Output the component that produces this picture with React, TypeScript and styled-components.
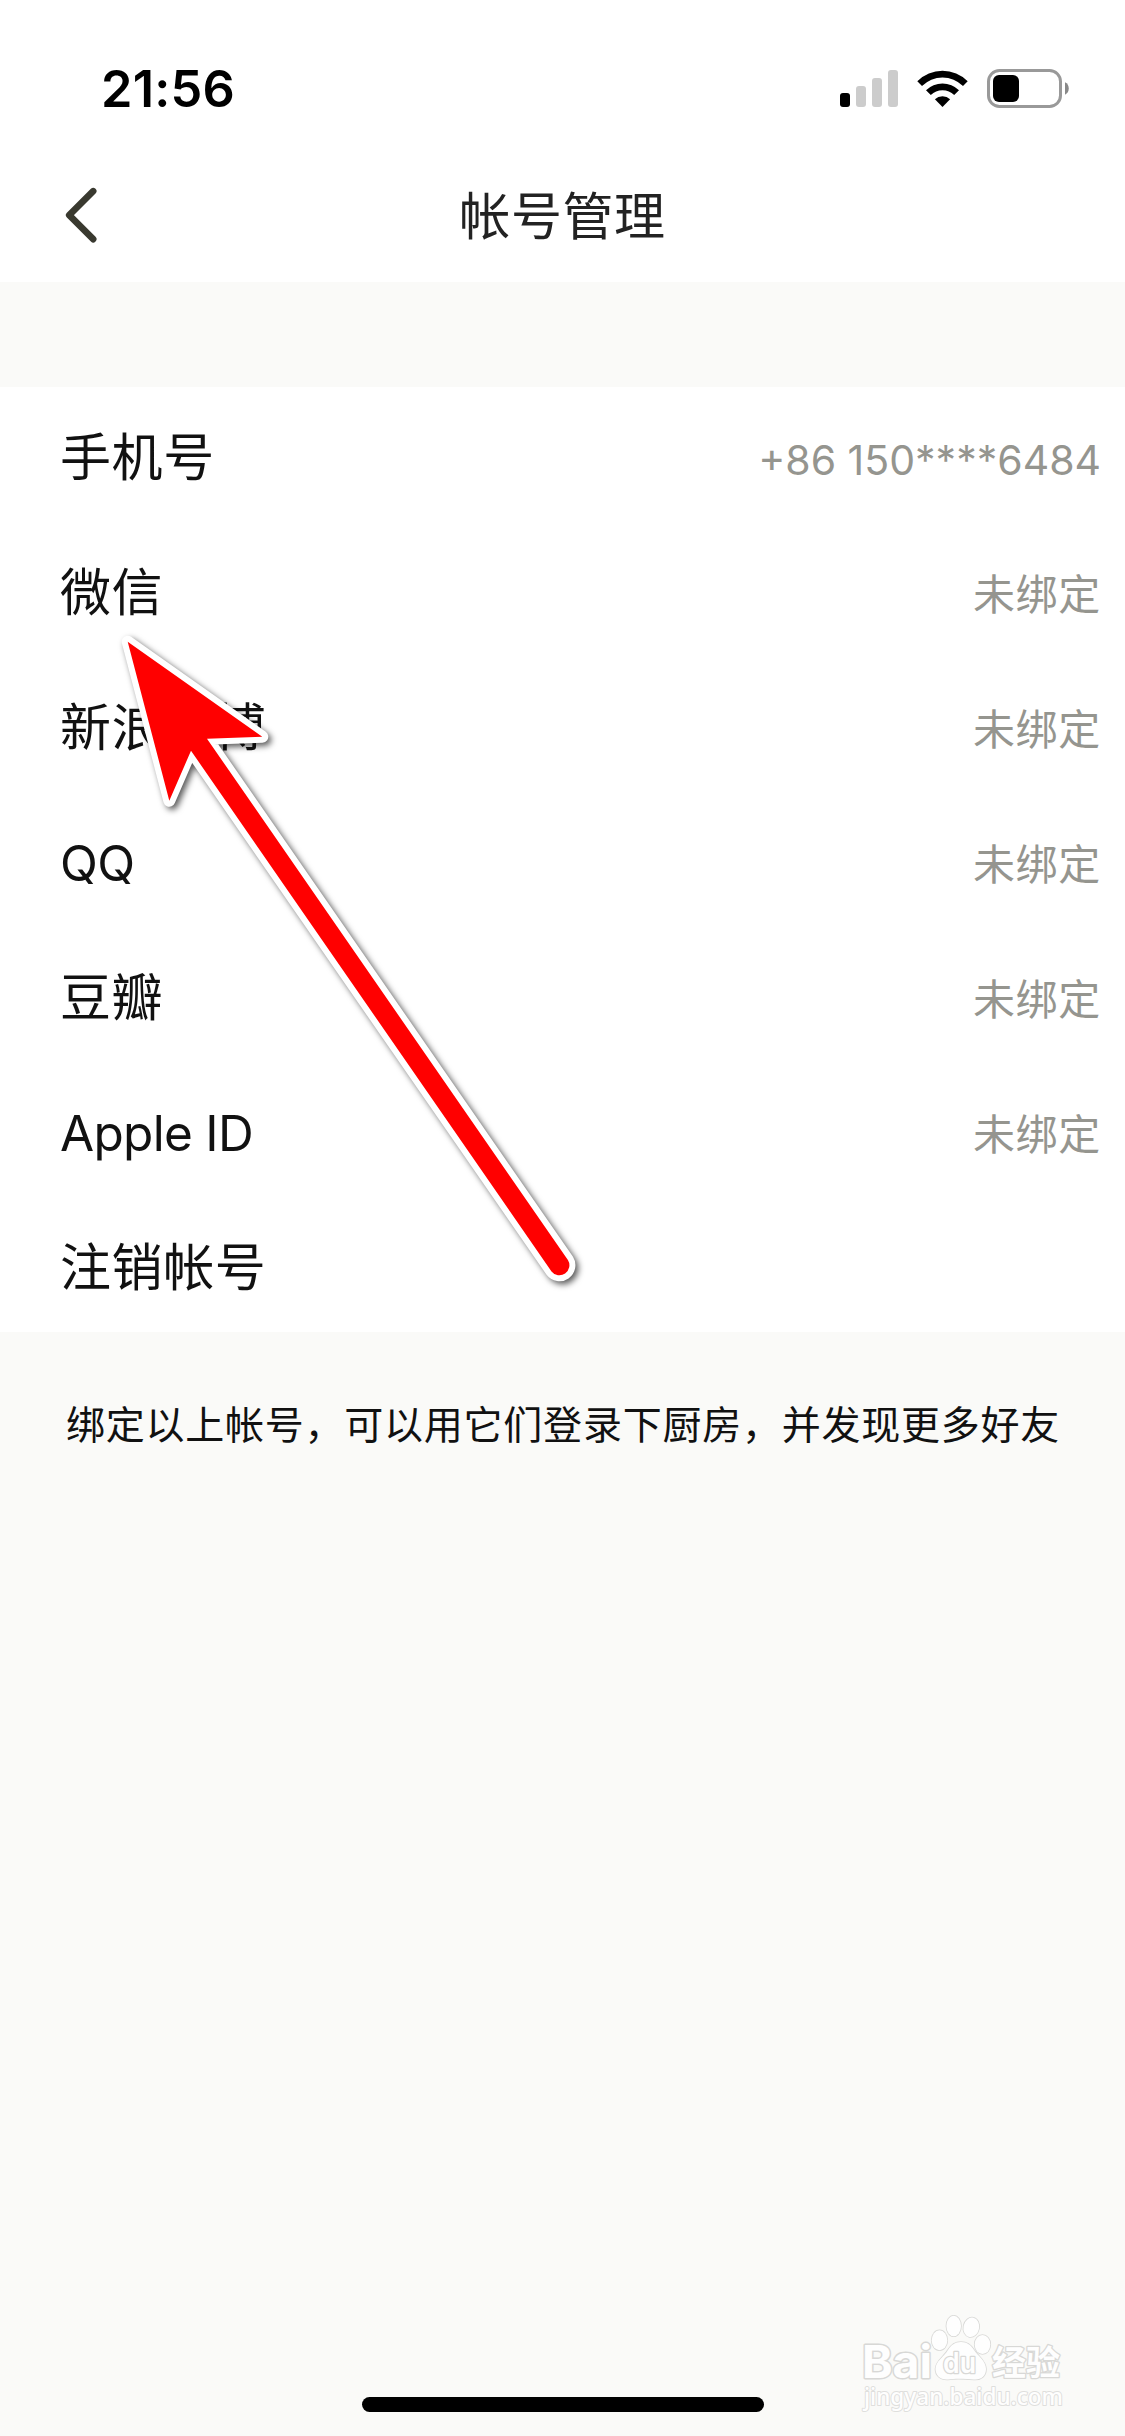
import React from "react";
import styled, { createGlobalStyle } from "styled-components";

const GlobalStyle = createGlobalStyle`
  * { box-sizing: border-box; }
  body {
    margin: 0;
    background: #fafaf8;
    font-family: Inter, "Noto Sans CJK SC", sans-serif;
  }
`;

const Screen = styled.div`
  position: relative;
  display: flex;
  flex-direction: column;
  width: 1125px;
  height: 2436px;
  overflow: hidden;
  background: #fafaf8;
`;

const StatusBar = styled.header`
  display: flex;
  align-items: flex-start;
  justify-content: space-between;
  height: 147px;
  padding: 69px 56px 0 101px;
  background: #fff;
`;

const Clock = styled.time`
  font-size: 50.5px;
  font-weight: 600;
  line-height: 40px;
  letter-spacing: 0.2px;
  color: #000;
`;

const StatusIcons = styled.div`
  display: flex;
  gap: 19px;
`;

const NavBar = styled.nav`
  display: grid;
  grid-template-columns: 150px 1fr 150px;
  align-items: center;
  height: 135px;
  background: #fff;
`;

const BackButton = styled.button`
  display: flex;
  justify-content: flex-start;
  padding: 0 0 0 60px;
  border: 0;
  background: none;
`;

const Title = styled.h1`
  margin: 0;
  padding-top: 5px;
  font-size: 51px;
  font-weight: 400;
  line-height: 60px;
  letter-spacing: 0.6px;
  text-align: center;
  color: #222;
`;

const List = styled.ul`
  display: flex;
  flex-direction: column;
  margin: 105px 0 0;
  padding: 0;
  list-style: none;
  background: #fff;
`;

const Row = styled.li`
  display: flex;
  align-items: center;
  justify-content: space-between;
  height: 135px;
  padding: 6px 24px 0 60px;
`;

const Label = styled.span<{ $latin?: boolean }>`
  font-size: ${(p) => (p.$latin ? "49.5px" : "51px")};
  line-height: 60px;
  letter-spacing: ${(p) => (p.$latin ? "-0.7px" : "0.6px")};
  color: #111;
`;

const Value = styled.span<{ $numeric?: boolean }>`
  padding-top: 4px;
  font-size: ${(p) => (p.$numeric ? "41px" : "42px")};
  line-height: 54px;
  letter-spacing: ${(p) => (p.$numeric ? "0" : "0.7px")};
  color: #95958f;
`;

const Hint = styled.p`
  flex: 1;
  margin: 0;
  padding: 66px 60px 0 66px;
  font-size: 39px;
  line-height: 54px;
  letter-spacing: 0.76px;
  white-space: nowrap;
  color: #111;
`;

const HomeIndicator = styled.div`
  align-self: center;
  width: 402px;
  height: 15px;
  margin-bottom: 24px;
  border-radius: 8px;
  background: #000;
`;

const ArrowOverlay = styled.svg`
  position: absolute;
  left: 0;
  top: 600px;
  pointer-events: none;
  filter: drop-shadow(3px 3px 3px rgba(0, 0, 0, 0.65));
`;

const Watermark = styled.svg`
  position: absolute;
  left: 840px;
  top: 2290px;
  pointer-events: none;
`;

const accounts = [
  { label: "手机号", value: "+86 150****6484", numeric: true },
  { label: "微信", value: "未绑定" },
  { label: "新浪微博", value: "未绑定" },
  { label: "QQ", value: "未绑定", latin: true },
  { label: "豆瓣", value: "未绑定" },
  { label: "Apple ID", value: "未绑定", latin: true },
  { label: "注销帐号" },
];

const SignalIcon = () => (
  <svg width="58" height="39" viewBox="0 0 58 39">
    <rect x="0" y="24" width="10" height="14" rx="3" fill="#000" />
    <rect x="16" y="17" width="10" height="21" rx="3" fill="#ccc" />
    <rect x="32" y="9" width="10" height="29" rx="3" fill="#ccc" />
    <rect x="48" y="1" width="10" height="37" rx="3" fill="#ccc" />
  </svg>
);

const WifiIcon = () => (
  <svg width="51" height="39" viewBox="0 0 51 39">
    <path d="M0.3 12.2 A35.6 35.6 0 0 1 50.7 12.2 L46 17 A29 29 0 0 0 5 17 Z" />
    <path d="M9 21.3 A23.5 23.5 0 0 1 42 21.3 L37.2 26 A16.6 16.6 0 0 0 13.8 26 Z" />
    <path d="M17.9 30.2 A11 11 0 0 1 33.1 30.2 L25.5 38 Z" />
  </svg>
);

const BatteryIcon = () => (
  <svg width="82" height="39" viewBox="0 0 82 39">
    <rect x="1.5" y="1.5" width="72" height="36" rx="11" fill="none" stroke="#999" strokeWidth="3" />
    <rect x="6" y="6" width="26" height="27" rx="6" fill="#000" />
    <path d="M78 13.3 C83 15.5 83 23.5 78 25.7 Z" fill="#888" />
  </svg>
);

const BackIcon = () => (
  <svg width="40" height="60" viewBox="0 0 40 60">
    <path
      d="M33.2 6.2 L9.2 30.2 L33.2 54.2"
      fill="none"
      stroke="#39392f"
      strokeWidth="6.6"
      strokeLinecap="round"
      strokeLinejoin="round"
    />
  </svg>
);

const arrowPath =
  "M127.7 41.7 L262.3 136.7 L207 138.7 L567.9 660 A10 10 0 0 1 551.5 671.4 L191 150.7 L169.3 200.7 Z";

const PointerArrow = () => (
  <ArrowOverlay width="620" height="720" viewBox="0 0 620 720">
    <path d={arrowPath} fill="#fff" stroke="#fff" strokeWidth="12" strokeLinejoin="round" />
    <path d={arrowPath} fill="#f00" />
  </ArrowOverlay>
);

const BaiduMark = () => (
  <Watermark width="240" height="130" viewBox="0 0 240 130">
    <g fill="#fefefe" stroke="#d8d8d6" strokeWidth="1.6" paintOrder="stroke" strokeLinejoin="round">
      <text x="22" y="88" fontFamily="Inter" fontWeight="700" fontSize="45" textLength="70" lengthAdjust="spacingAndGlyphs" strokeWidth="3">Bai</text>
      <ellipse cx="99.5" cy="50.3" rx="7.8" ry="10" />
      <ellipse cx="113.7" cy="36" rx="7.3" ry="10.3" />
      <ellipse cx="131.3" cy="37.3" rx="7.8" ry="9.8" transform="rotate(12 131.3 37.3)" />
      <ellipse cx="142.5" cy="54.5" rx="7.8" ry="9.5" />
      <path d="M121 52 C127 52 131 55 134 60 C138 66 146 71 146 79 C146 86 141 90 134 89.5 C128 89 116 88 108 89.5 C100 90 95.5 85 95.5 79 C95.5 71 104 67 108 60 C111 55 115 52 121 52 Z" />
      <text x="103" y="83" fontFamily="Inter" fontWeight="600" fontSize="28" textLength="33" lengthAdjust="spacingAndGlyphs" strokeWidth="2.6">du</text>
      <text x="152" y="84.5" fontFamily="Noto Sans CJK SC" fontWeight="700" fontSize="34" strokeWidth="2.6">经验</text>
      <text x="24" y="114.5" fontFamily="Noto Sans" fontWeight="500" fontSize="23" textLength="199" lengthAdjust="spacingAndGlyphs" strokeWidth="2" stroke="#dfdfdd">jingyan.baidu.com</text>
    </g>
  </Watermark>
);

export default function App() {
  return (
    <Screen>
      <GlobalStyle />
      <StatusBar>
        <Clock>21:56</Clock>
        <StatusIcons>
          <SignalIcon />
          <WifiIcon />
          <BatteryIcon />
        </StatusIcons>
      </StatusBar>
      <NavBar>
        <BackButton aria-label="返回">
          <BackIcon />
        </BackButton>
        <Title>帐号管理</Title>
      </NavBar>
      <List>
        {accounts.map((a) => (
          <Row key={a.label}>
            <Label $latin={a.latin}>{a.label}</Label>
            {a.value && <Value $numeric={a.numeric}>{a.value}</Value>}
          </Row>
        ))}
      </List>
      <Hint>绑定以上帐号，可以用它们登录下厨房，并发现更多好友</Hint>
      <HomeIndicator />
      <PointerArrow />
      <BaiduMark />
    </Screen>
  );
}
